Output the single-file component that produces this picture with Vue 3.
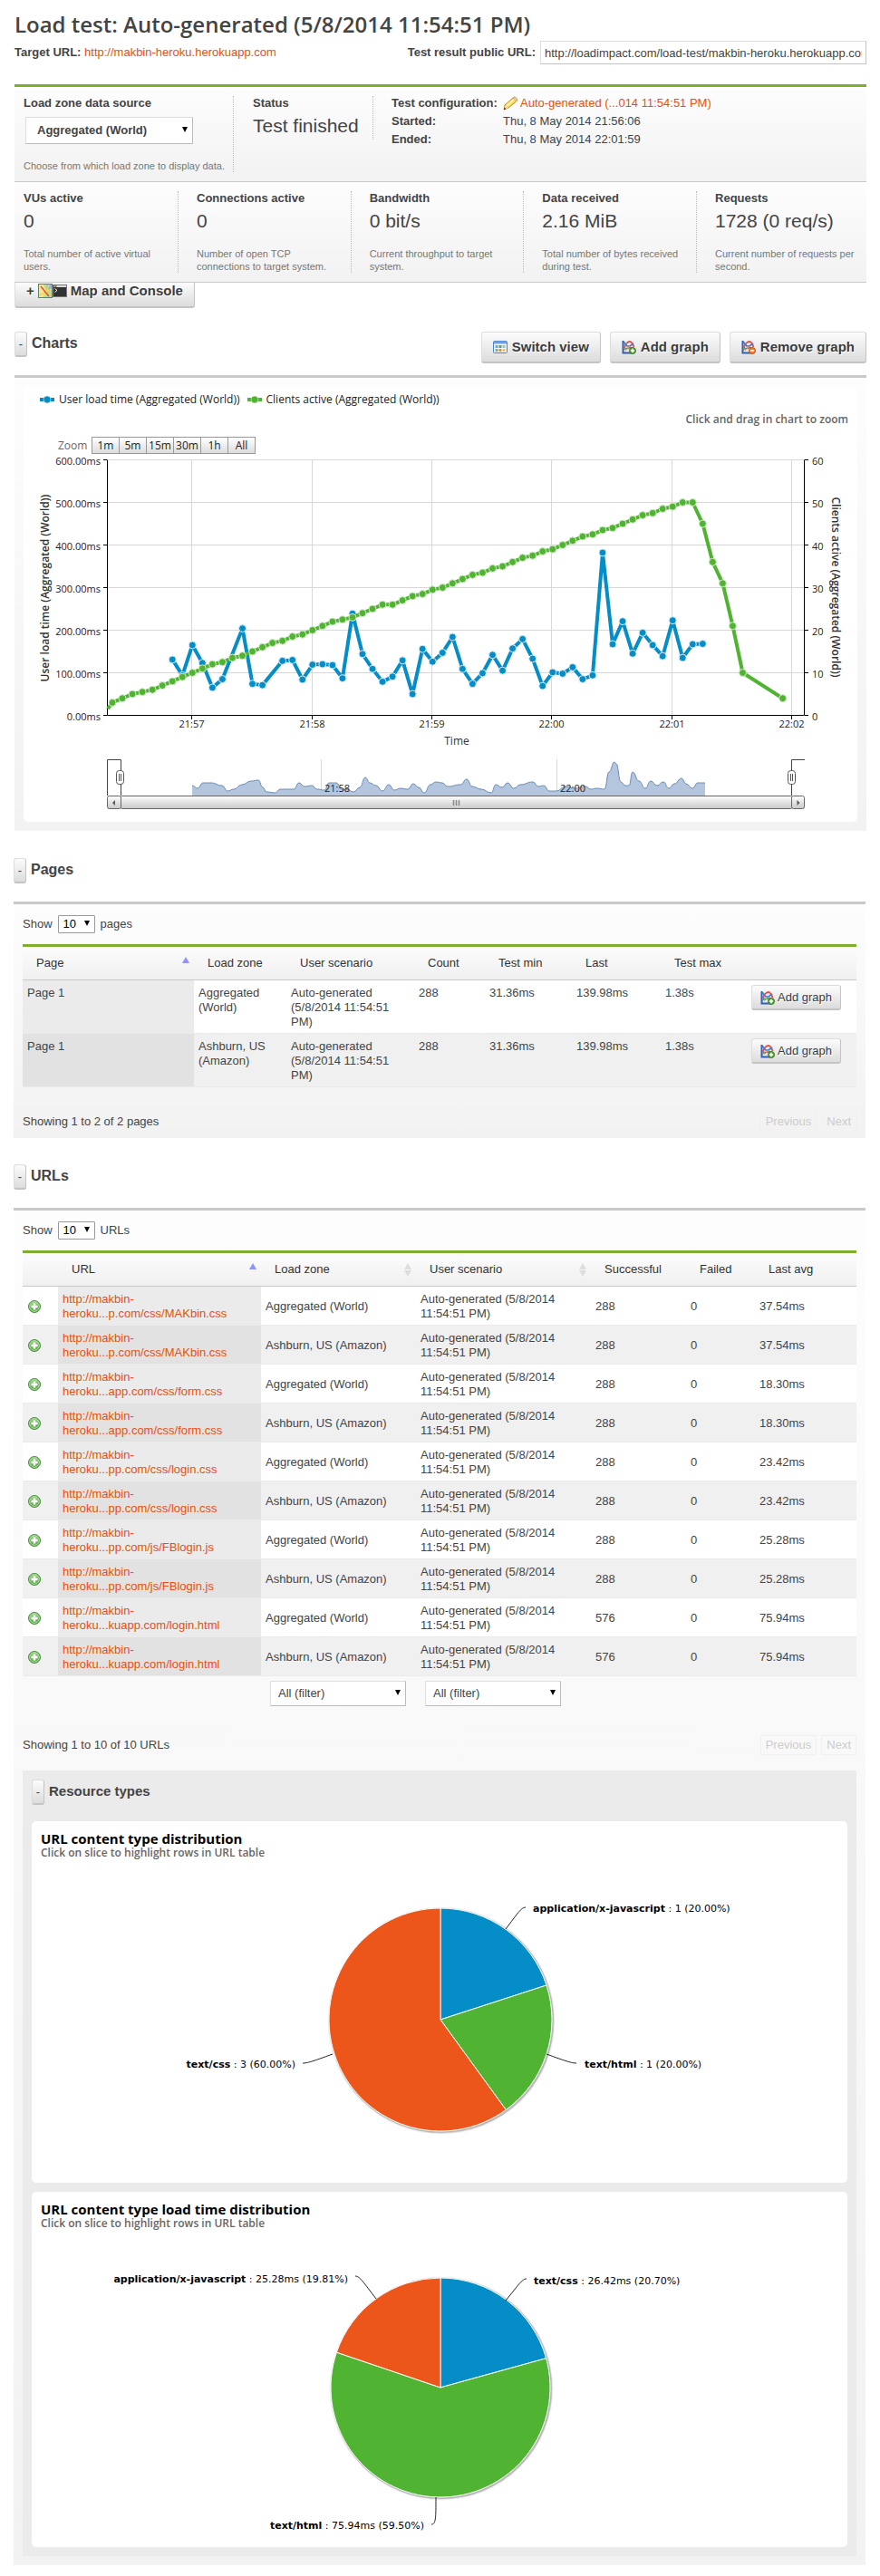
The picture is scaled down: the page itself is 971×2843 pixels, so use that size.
<script setup>
import { ref } from 'vue'

const loadZone = ref('Aggregated (World)')
const publicUrl = ref('http://loadimpact.com/load-test/makbin-heroku.herokuapp.com-1')
const pageSize = ref('10')
const urlSize = ref('10')
const zoneFilter = ref('All (filter)')
const scenarioFilter = ref('All (filter)')

const stats = [
  { name: 'VUs active', value: '0', note: 'Total number of active virtual users.' },
  { name: 'Connections active', value: '0', note: 'Number of open TCP connections to target system.' },
  { name: 'Bandwidth', value: '0 bit/s', note: 'Current throughput to target system.' },
  { name: 'Data received', value: '2.16 MiB', note: 'Total number of bytes received during test.' },
  { name: 'Requests', value: '1728 (0 req/s)', note: 'Current number of requests per second.' }
]

const scenario = 'Auto-generated (5/8/2014 11:54:51 PM)'
const zones = ['Aggregated (World)', 'Ashburn, US (Amazon)']
const pages = zones.map((zone) => ({
  page: 'Page 1', zone, scenario, count: 288, min: '31.36ms', last: '139.98ms', max: '1.38s'
}))
const resources = [
  ['heroku...p.com/css/MAKbin.css', 288, '37.54ms'],
  ['heroku...app.com/css/form.css', 288, '18.30ms'],
  ['heroku...pp.com/css/login.css', 288, '23.42ms'],
  ['heroku...pp.com/js/FBlogin.js', 288, '25.28ms'],
  ['heroku...kuapp.com/login.html', 576, '75.94ms']
]
const urls = resources.flatMap(([tail, ok, avg]) => zones.map((zone) => ({ tail, ok, avg, zone })))

/* Line chart geometry */
const plot = { left: 92.5, right: 861.5, top: 80.5, bottom: 362.5, step: 47 }
const sampleX = (k) => 98 + k * 11.04
const valueY = (v) => plot.bottom - (v / 10) * plot.step

const clientValues = [
  3, 4, 5, 5.5, 6, 7, 8, 9, 10, 11, 12, 12.5, 13.5, 14, 15, 16, 17, 17.5, 18.5, 19, 20, 21, 22, 22.5, 23, 24, 25,
  26, 26, 27, 28, 28.5, 29.5, 30, 31, 32, 33, 33.5, 34.5, 35, 36, 37, 37.5, 38.5, 39, 40, 41, 42, 42.5, 43.5, 44,
  45, 46, 47, 47.5, 48.5, 49, 50, 50, 45, 36, 31, 21, 10, null, null, null, 4
]
const loadValues = [
  131, 94, 165, 123, 65, 85, null, 204, 74, 71, null, 128, 130, 84, 119, 120, 118, 87, 239, 144, 109, 79, 91, 129,
  50, 156, 126, 147, 184, 109, 74, 99, 142, 105, 157, 179, 133, 69, 101, 98, 113, 85, 94, 382, 167, 221, 145, 194,
  165, 139, 223, 135, 167, 168
]
const toPoints = (values, start, scale) => values
  .map((v, i) => (v === null ? null : [sampleX(i + start), valueY(v * scale)]))
  .filter(Boolean)
const clients = toPoints(clientValues, 0, 1)
const loads = toPoints(loadValues, 6, 0.1)
const line = (pts) => pts.map((p) => p.join(',')).join(' ')
const clientLine = line([[93, 355], ...clients])
const loadLine = line(loads)

const leftTicks = [6, 5, 4, 3, 2, 1, 0].map((n) => ({ y: plot.bottom - n * plot.step, ms: (n * 100).toFixed(2) + 'ms', n: n * 10 }))
const times = [['21:57', 185.5], ['21:58', 318.5], ['21:59', 450.5], ['22:00', 582.5], ['22:01', 715.5], ['22:02', 847.5]]
const ranges = ['1m', '5m', '15m', '30m', '1h', 'All']

/* Navigator: [x, height] pairs above its baseline */
const navigator = [
  [186, 11], [192, 8], [198, 14], [207, 14], [219, 11], [225, 5], [232, 7], [241, 12], [251, 16], [259, 17],
  [264, 9], [268, 4], [278, 3], [283, 7], [298, 7], [304, 14], [310, 10], [318, 11], [324, 7], [332, 6],
  [337, 14], [345, 14], [351, 7], [357, 7], [364, 4], [371, 9], [377, 20], [382, 14], [389, 11], [396, 5],
  [403, 12], [409, 6], [416, 8], [424, 7], [430, 13], [436, 9], [442, 3], [449, 12], [455, 15], [462, 14],
  [468, 10], [482, 12], [489, 18], [495, 10], [505, 7], [516, 3], [521, 12], [528, 9], [534, 14], [541, 8],
  [548, 12], [562, 15], [568, 10], [574, 11], [580, 5], [588, 5], [598, 10], [608, 8], [620, 10], [626, 7],
  [633, 8], [641, 7], [646, 26], [652, 37], [654, 35], [659, 15], [664, 11], [668, 11], [672, 26], [679, 16],
  [686, 8], [692, 16], [699, 11], [706, 15], [712, 8], [718, 13], [726, 19], [731, 13], [738, 8], [744, 14], [752, 14]
].map(([x, h]) => [x, 451 - h])
const smooth = (pts) => pts.slice(1).reduce((d, p, i) => {
  const q = pts[i]
  const mid = (p[0] + q[0]) / 2
  return `${d} C${mid},${q[1]} ${mid},${p[1]} ${p[0]},${p[1]}`
}, `M${pts[0]}`)
const navLine = smooth(navigator)
const navArea = `${navLine} V451 H186 Z`

/* Pie charts */
const colors = ['#058dc7', '#50b432', '#ed561b']
const makeSlices = (cx, cy, r, shares) => {
  let at = 0
  const point = (t) => `${cx + r * Math.sin(t * 2 * Math.PI)},${cy - r * Math.cos(t * 2 * Math.PI)}`
  return shares.map((share, i) => {
    const from = at
    at += share
    return { color: colors[i], d: `M${cx},${cy} L${point(from)} A${r},${r} 0 ${share > 0.5 ? 1 : 0} 1 ${point(at)} Z` }
  })
}
const pies = [
  {
    title: 'URL content type distribution', box: '0 48 900 351', cx: 451, cy: 219, r: 123,
    slices: makeSlices(451, 219, 123, [0.2, 0.2, 0.6]),
    labels: [
      { name: 'application/x-javascript', text: '1 (20.00%)', x: 553, y: 100, anchor: 'start', path: 'M545,95 C540,95 536,102 523,119' },
      { name: 'text/html', text: '1 (20.00%)', x: 610, y: 272, anchor: 'start', path: 'M601,267 C596,267 590,265 568,257' },
      { name: 'text/css', text: '3 (60.00%)', x: 291, y: 272, anchor: 'end', path: 'M299,267 C304,267 310,265 332,257' }
    ]
  },
  {
    title: 'URL content type load time distribution', box: '0 48 900 344', cx: 451, cy: 216, r: 121,
    slices: makeSlices(451, 216, 121, [0.207, 0.595, 0.198]),
    labels: [
      { name: 'text/css', text: '26.42ms (20.70%)', x: 554, y: 102, anchor: 'start', path: 'M546,96 C541,96 537,103 523,120' },
      { name: 'text/html', text: '75.94ms (59.50%)', x: 433, y: 372, anchor: 'end', path: 'M441,367 C446,367 446,360 446,337' },
      { name: 'application/x-javascript', text: '25.28ms (19.81%)', x: 349, y: 100, anchor: 'end', path: 'M357,93 C362,93 366,100 380,118' }
    ]
  }
]
</script>

<template>
  <svg class="sprite" width="0" height="0" aria-hidden="true">
    <linearGradient id="steel" x1="0" y1="0" x2="0" y2="1">
      <stop offset="0" stop-color="#fff" /><stop offset="1" stop-color="#c8c8c8" />
    </linearGradient>
    <radialGradient id="leaf" cx=".5" cy=".3" r=".7">
      <stop offset="0" stop-color="#a5d68f" /><stop offset="1" stop-color="#4a9a3c" />
    </radialGradient>
    <symbol id="graph" viewBox="0 0 16 16">
      <path d="M1.5 1V14.5H11" fill="none" stroke="#2a63b5" stroke-width="2" />
      <path d="M2 11C4 9 6 10 8 9S11 8 13 10" fill="none" stroke="#4c9a48" stroke-width="1.5" />
      <path d="M3 9C4 4 7 2 9 2S12 4 13.5 8" fill="none" stroke="#ee4b46" stroke-width="1.8" />
      <path d="M2 2L6 7H9L13 4" fill="none" stroke="#3c7bd0" stroke-width="1.6" />
      <path d="M4 12L9 7" stroke="#e98a8a" />
    </symbol>
    <symbol id="graph-add" viewBox="0 0 16 16">
      <use href="#graph" />
      <circle cx="12" cy="12" r="3.5" fill="#5da03f" stroke="#3d7a24" />
      <path d="M12 9.8V14.2M9.8 12H14.2" stroke="#fff" stroke-width="1.5" />
    </symbol>
    <symbol id="graph-remove" viewBox="0 0 16 16">
      <use href="#graph" />
      <circle cx="12" cy="12" r="3.5" fill="#f08030" stroke="#c85208" />
      <path d="M9.8 12H14.2" stroke="#fff" stroke-width="1.5" />
    </symbol>
    <symbol id="plus" viewBox="0 0 16 16">
      <circle cx="8" cy="8" r="6.5" fill="url(#leaf)" stroke="#46913a" />
      <circle cx="8" cy="8" r="5.3" fill="none" stroke="#b5dfa8" />
      <path d="M8 4.5V11.5M4.5 8H11.5" stroke="#fff" stroke-width="2.4" />
    </symbol>
  </svg>

  <main class="page">
    <div class="overview">
      <header>
        <h1>Load test: Auto-generated (5/8/2014 11:54:51 PM)</h1>
        <div class="links">
          <p><b>Target URL:</b> <a href="#">http://makbin-heroku.herokuapp.com</a></p>
          <label class="public"><b>Test result public URL:</b><input v-model="publicUrl" type="text" readonly></label>
        </div>
      </header>

      <section class="summary">
        <div class="band">
          <div class="cell zone">
            <label for="zone"><b>Load zone data source</b></label>
            <span class="pick big">
              <select id="zone" v-model="loadZone"><option v-for="z in zones" :key="z">{{ z }}</option></select>
            </span>
            <p class="note">Choose from which load zone to display data.</p>
          </div>
          <div class="cell status"><b>Status</b><p class="value">Test finished</p></div>
          <dl class="config">
            <dt>Test configuration:</dt>
            <dd>
              <svg width="16" height="16" viewBox="0 0 16 16" aria-hidden="true">
                <path d="M1 15L2 10L11 2C12 1 13 1 14 2C16 3.5 15.5 5 14.5 6L6 13Z" fill="#f8d75c" stroke="#c58b28" />
                <path d="M3 10L11.5 3L13 4.5L4.5 12Z" fill="#fff0a0" />
                <path d="M11 2L14.5 6L15.5 4C15.5 2 14 .8 12 1.3Z" fill="#f5cda8" stroke="#c99262" stroke-width=".7" />
                <path d="M2 10.5L5.5 13.5L1 15Z" fill="#f3d5a4" /><path d="M1.5 12.5L3.5 14.3L.8 15.2Z" fill="#4a3420" />
              </svg>
              <a href="#">Auto-generated (...014 11:54:51 PM)</a>
            </dd>
            <dt>Started:</dt><dd>Thu, 8 May 2014 21:56:06</dd>
            <dt>Ended:</dt><dd>Thu, 8 May 2014 22:01:59</dd>
          </dl>
        </div>
        <div class="band stats">
          <div v-for="s in stats" :key="s.name" class="cell">
            <b>{{ s.name }}</b><p class="value">{{ s.value }}</p><p class="note">{{ s.note }}</p>
          </div>
        </div>
      </section>
      <button class="button map" type="button">
        <span>+</span>
        <svg width="32" height="16" viewBox="0 0 32 16" aria-hidden="true">
          <rect x=".5" y=".5" width="15" height="15" fill="#b9dc92" stroke="#5f7d6a" />
          <path d="M1 1H6L9 8L5 15H1Z" fill="#f4e69a" /><path d="M10 1H15V8L9 6Z" fill="#8fbbe8" />
          <path d="M1 13L15 6M7 15L12 1" stroke="#f7d44c" stroke-width="1.5" /><path d="M3 3L7 8L12 14" fill="none" stroke="#e2513d" stroke-width="1.5" />
          <rect x="16.5" y="1.5" width="15" height="13" fill="#333" stroke="#777" />
          <path d="M17 3H31" stroke="#ddd" stroke-width="2" /><path d="M17 3H18.5" stroke="#d33" stroke-width="2" /><path d="M19 3H20.5" stroke="#3a3" stroke-width="2" />
          <path d="M18.5 5.5L21 7.5L18.5 9.5" fill="none" stroke="#fff" />
        </svg>
        Map and Console
      </button>

      <section class="charts">
        <div class="head">
          <button class="toggle" type="button" aria-label="Collapse charts">-</button><h2>Charts</h2>
          <div class="actions">
            <button class="button" type="button">
              <svg width="16" height="16" viewBox="0 0 16 16" aria-hidden="true">
                <rect x=".5" y="1.5" width="15" height="13" rx="1" fill="#f5f9ff" stroke="#4d7fc4" /><path d="M1 3H15" stroke="#6fa0e2" stroke-width="3" />
                <path d="M2.5 7.5H5.5" stroke="#5ea7e8" stroke-width="3" /><path d="M6.5 7.5H9.5" stroke="#57a957" stroke-width="3" /><path d="M10.5 7.5H13.5" stroke="#8cc0f0" stroke-width="3" />
                <path d="M2.5 11.5H5.5" stroke="#76b976" stroke-width="3" /><path d="M6.5 11.5H9.5" stroke="#ec8a3c" stroke-width="3" /><path d="M10.5 11.5H13.5" stroke="#eec454" stroke-width="3" />
              </svg>Switch view
            </button>
            <button class="button" type="button"><svg width="16" height="16"><use href="#graph-add" /></svg>Add graph</button>
            <button class="button" type="button"><svg width="16" height="16"><use href="#graph-remove" /></svg>Remove graph</button>
          </div>
        </div>
        <div class="panel">
          <div class="card line-card">
            <div class="legend">
              <svg width="16" height="10"><path d="M0 5H16" stroke="#058dc7" stroke-width="4" /><circle cx="8" cy="5" r="4" fill="#058dc7" stroke="#fff" stroke-opacity=".5" /></svg>
              <span>User load time (Aggregated (World))</span>
              <svg width="16" height="10"><path d="M0 5H16" stroke="#50b432" stroke-width="4" /><circle cx="8" cy="5" r="4" fill="#50b432" stroke="#fff" stroke-opacity=".5" /></svg>
              <span>Clients active (Aggregated (World))</span>
            </div>
            <p class="hint">Click and drag in chart to zoom</p>
            <div class="zoom"><span>Zoom</span><div class="ranges"><button v-for="r in ranges" :key="r" type="button">{{ r }}</button></div></div>
            <svg class="graphic" viewBox="0 74 920 406" role="img" aria-label="User load time and active clients over time">
              <g stroke="#d8d8d8">
                <path v-for="t in leftTicks.slice(0, 6)" :key="t.n" :d="`M${plot.left} ${t.y}H${plot.right}`" />
                <path v-for="t in times" :key="t[0]" :d="`M${t[1]} ${plot.top}V${plot.bottom}`" />
              </g>
              <g stroke="#000">
                <path :d="`M${plot.left} ${plot.top}V${plot.bottom}H${plot.right}V${plot.top}`" fill="none" />
                <path v-for="t in leftTicks" :key="t.n" :d="`M88 ${t.y}H92M862 ${t.y}H866`" />
                <path v-for="t in times" :key="t[0]" :d="`M${t[1]} 363V367`" />
              </g>
              <g class="tick">
                <template v-for="t in leftTicks" :key="t.n">
                  <text x="85" :y="t.y + 5" text-anchor="end">{{ t.ms }}</text><text x="870" :y="t.y + 5">{{ t.n }}</text>
                </template>
                <text v-for="t in times" :key="t[0]" :x="t[1]" y="376" text-anchor="middle">{{ t[0] }}</text>
              </g>
              <polyline :points="loadLine" fill="none" stroke="#058dc7" stroke-width="4" stroke-linejoin="round" />
              <circle v-for="(p, i) in loads" :key="i" :cx="p[0]" :cy="p[1]" r="4" fill="#058dc7" stroke="#d8edf7" />
              <polyline :points="clientLine" fill="none" stroke="#50b432" stroke-width="4" stroke-linejoin="round" />
              <circle v-for="(p, i) in clients" :key="i" :cx="p[0]" :cy="p[1]" r="4" fill="#50b432" stroke="#d3ecc9" />
              <g class="axis">
                <text transform="translate(28 222) rotate(-90)" text-anchor="middle">User load time (Aggregated (World))</text>
                <text transform="translate(892 221) rotate(90)" text-anchor="middle">Clients active (Aggregated (World))</text>
              </g>
              <text class="time" x="478" y="395" text-anchor="middle">Time</text>
              <path d="M328.5 411V451M588.5 411V451" stroke="#d8d8d8" />
              <path :d="navArea" fill="#b4c6dd" /><path :d="navLine" fill="none" stroke="#6c8cb6" />
              <g class="tick"><text x="332" y="447">21:58</text><text x="592" y="447">22:00</text></g>
              <path d="M92.5 451V411.5H107.5V451M847.5 451V411.5H862" fill="none" stroke="#444" />
              <g stroke="#666" fill="url(#steel)">
                <rect x="107.5" y="451.5" width="740" height="14" rx="1" />
                <rect x="92.5" y="451.5" width="15" height="14" rx="2" /><rect x="847.5" y="451.5" width="14" height="14" rx="2" />
              </g>
              <path d="M101 456V462L98 459ZM853.5 456V462L856.5 459Z" fill="#555" />
              <path d="M474.5 456V462M477.5 456V462M480.5 456V462" stroke="#888" stroke-width="1.5" />
              <g stroke="#555" fill="#fff">
                <rect x="102.5" y="423.5" width="8" height="15" rx="3" /><rect x="843.5" y="423.5" width="8" height="15" rx="3" />
                <path d="M105.5 427V435M107.5 427V435M846.5 427V435M848.5 427V435" />
              </g>
            </svg>
          </div>
        </div>
      </section>
    </div>

    <div class="tables">
      <section>
        <div class="head"><button class="toggle" type="button" aria-label="Collapse pages">-</button><h2>Pages</h2></div>
        <div class="panel list">
          <label class="show">Show <span class="pick small"><select v-model="pageSize"><option>10</option><option>25</option></select></span> pages</label>
          <table class="pages">
            <colgroup><col class="w189"><col class="w102"><col class="w141"><col class="w78"><col class="w96"><col class="w98"><col class="w95"><col></colgroup>
            <thead>
              <tr>
                <th>Page <i class="sort asc"></i></th><th>Load zone</th><th>User scenario</th><th>Count</th><th>Test min</th><th>Last</th><th>Test max</th><th></th>
              </tr>
            </thead>
            <tbody>
              <tr v-for="p in pages" :key="p.zone">
                <td class="sorted">{{ p.page }}</td><td>{{ p.zone }}</td><td>{{ p.scenario }}</td><td>{{ p.count }}</td><td>{{ p.min }}</td><td>{{ p.last }}</td><td>{{ p.max }}</td>
                <td><button class="button slim" type="button"><svg width="16" height="16"><use href="#graph-add" /></svg>Add graph</button></td>
              </tr>
            </tbody>
          </table>
          <div class="foot"><span>Showing 1 to 2 of 2 pages</span><button type="button" disabled>Previous</button><button type="button" disabled>Next</button></div>
        </div>
      </section>

      <section>
        <div class="head second"><button class="toggle" type="button" aria-label="Collapse URLs">-</button><h2>URLs</h2></div>
        <div class="panel list last">
          <label class="show">Show <span class="pick small"><select v-model="urlSize"><option>10</option><option>25</option></select></span> URLs</label>
          <table class="urls">
            <colgroup><col class="w39"><col class="w224"><col class="w171"><col class="w193"><col class="w105"><col class="w76"><col></colgroup>
            <thead>
              <tr>
                <th></th><th>URL <i class="sort asc"></i></th><th>Load zone <i class="sort both"></i></th><th>User scenario <i class="sort both"></i></th><th>Successful</th><th>Failed</th><th>Last avg</th>
              </tr>
            </thead>
            <tbody>
              <tr v-for="(u, i) in urls" :key="i">
                <td><button class="expand" type="button" aria-label="Show details"><svg width="16" height="16"><use href="#plus" /></svg></button></td>
                <td class="sorted"><a href="#">http://makbin-<br>{{ u.tail }}</a></td><td>{{ u.zone }}</td><td>{{ scenario }}</td><td>{{ u.ok }}</td><td>0</td><td>{{ u.avg }}</td>
              </tr>
            </tbody>
            <tfoot>
              <tr>
                <td></td><td></td>
                <td><span class="pick filter"><select v-model="zoneFilter" aria-label="Load zone filter"><option>All (filter)</option></select></span></td>
                <td><span class="pick filter"><select v-model="scenarioFilter" aria-label="User scenario filter"><option>All (filter)</option></select></span></td>
                <td></td><td></td><td></td>
              </tr>
            </tfoot>
          </table>
          <div class="foot"><span>Showing 1 to 10 of 10 URLs</span><button type="button" disabled>Previous</button><button type="button" disabled>Next</button></div>

          <section class="resources">
            <div class="subhead"><button class="toggle" type="button" aria-label="Collapse resource types">-</button><h3>Resource types</h3></div>
            <div v-for="pie in pies" :key="pie.title" class="card pie">
              <h4>{{ pie.title }}</h4>
              <p>Click on slice to highlight rows in URL table</p>
              <svg class="graphic" :viewBox="pie.box" role="img" :aria-label="pie.title">
                <g fill="none" stroke="#000">
                  <circle :cx="pie.cx + 1" :cy="pie.cy + 1" :r="pie.r" stroke-opacity=".05" stroke-width="5" />
                  <circle :cx="pie.cx + 1" :cy="pie.cy + 1" :r="pie.r" stroke-opacity=".1" stroke-width="3" />
                  <circle :cx="pie.cx + 1" :cy="pie.cy + 1" :r="pie.r" stroke-opacity=".15" stroke-width="2" />
                </g>
                <path v-for="s in pie.slices" :key="s.color" :d="s.d" :fill="s.color" stroke="#fff" stroke-linejoin="round" />
                <path v-for="l in pie.labels" :key="l.name" :d="l.path" fill="none" stroke="#222" />
                <text v-for="l in pie.labels" :key="l.name" class="label" :x="l.x" :y="l.y" :text-anchor="l.anchor"><tspan class="strong">{{ l.name }}</tspan> : {{ l.text }}</text>
              </svg>
            </div>
          </section>
        </div>
      </section>
    </div>
  </main>
</template>

<style>
body { background: #fff; }
</style>

<style scoped>
* { box-sizing: border-box; }
.page { padding: 12px 0 0; font: 13px/16px "Liberation Sans", Arial, sans-serif; color: #444; }
.sprite { position: absolute; }
.overview { padding: 0 15px 0 16px; }
.tables { padding: 0 16px 0 15px; }
h1, h2, h3, h4, p, dl, dd { margin: 0; }
a { color: #e8500f; text-decoration: none; }
button, input, select { font: inherit; color: inherit; margin: 0; }
h1 { font: 600 24px/30px "Open Sans", "Noto Sans", sans-serif; white-space: nowrap; }
.links { display: flex; justify-content: space-between; align-items: center; margin: 3px 0 22px; }
.public { display: flex; align-items: center; gap: 5px; }
.public input { width: 360px; height: 26px; padding: 0 4px; border: 1px solid #ddd; border-right-color: #c4c4c4; border-bottom: 1px solid #c4c4c4; background: #fff; }

.summary { border-top: 3px solid #7fae2c; }
.band { display: flex; padding: 10px 0; border-bottom: 1px solid #c8c8c8; background: linear-gradient(#fdfdfd, #f2f2f2); }
.band b, .band dt { font-weight: bold; }
.cell { display: flex; flex-direction: column; }
.value { margin-top: 5px; font-size: 21px; line-height: 24px; }
.note { font-size: 11px; line-height: 14px; color: #777; }
.zone { width: 242px; padding-left: 10px; border-right: 1px dotted #bbb; }
.zone .note { margin-top: 17px; }
.status { width: 154px; height: 48px; padding-left: 21px; border-right: 1px dotted #bbb; }
.config { display: grid; grid-template-columns: 123px auto; grid-auto-rows: 20px; padding-left: 20px; }
.config dd { display: flex; gap: 3px; }
.stats .cell { flex: 1; padding: 0 10px 0 20px; border-right: 1px dotted #bbb; }
.stats .cell:first-child { flex: 0 0 181px; padding-left: 10px; }
.stats .cell:last-child { border-right: 0; flex: 0 0 187px; }
.stats .note { margin-top: 17px; }

.pick { position: relative; display: inline-flex; }
.pick::after { content: ""; position: absolute; right: 6px; top: 50%; margin-top: -4px; border: 3px solid transparent; border-top: 6px solid #000; border-bottom: 0; pointer-events: none; }
.pick select { appearance: none; width: 100%; border: 1px solid #ddd; border-right-color: #bbb; border-bottom-color: #bbb; border-radius: 0; background: #fff; }
.big { width: 185px; margin: 7px 0 0 2px; }
.big select { height: 30px; padding: 0 12px; font-weight: bold; }
.small { width: 41px; margin: 0 3px; }
.small select { height: 20px; padding: 0 5px; border-color: #999; border-radius: 1px; color: #000; }
.filter { width: 150px; margin-left: 5px; }
.filter select { height: 28px; padding: 0 8px; }

.button { display: inline-flex; align-items: center; justify-content: center; gap: 5px; height: 35px; padding: 0 12px; border: 1px solid #ddd; border-right-color: #c4c4c4; border-bottom: 2px solid #c4c4c4; border-radius: 3px; background: linear-gradient(#fcfcfc, #dcdcdc); font-size: 15px; font-weight: bold; color: #3c3c3c; text-shadow: 1px 1px #fff; white-space: nowrap; }
.map { gap: 4px; height: 28px; padding: 0 12px 8px; border-top: 0; border-radius: 0 0 3px 3px; vertical-align: top; }
.slim { height: 28px; padding: 0 9px; gap: 3px; font-size: 13px; font-weight: normal; }
.toggle { width: 14px; height: 28px; padding: 0; border: 1px solid #ddd; border-right-color: #c4c4c4; border-bottom: 2px solid #c4c4c4; border-radius: 3px; background: linear-gradient(#fcfcfc, #dcdcdc); text-align: center; }
.charts { margin-top: 26px; }
.head { display: flex; align-items: flex-start; height: 48px; gap: 5px; }
h2, h3 { font-size: 16px; line-height: 26px; }
h3 { font-size: 15px; }
.actions { display: flex; gap: 10px; margin-left: auto; }
.tables .head { margin-top: 30px; }
.tables .second { margin-top: 29px; }
.panel { padding: 10px; border-top: 3px solid #c9c9c9; background: linear-gradient(#fdfdfd, #f2f2f2); }
.card { border-radius: 5px; background: #fff; }
.graphic { display: block; width: 100%; height: auto; }

.line-card, .pie { font-family: "Open Sans", "Noto Sans", sans-serif; }
.line-card { padding-top: 6px; }
.legend { display: flex; align-items: center; padding-left: 18px; font-size: 12px; font-weight: 500; line-height: 16px; color: #222; }
.legend span { margin: 0 8px 0 5px; }
.hint { padding: 6px 10px 0 0; text-align: right; font-size: 12px; font-weight: 600; line-height: 16px; color: #666; }
.zoom { display: flex; padding: 11px 0 0 38px; font-size: 12px; line-height: 19px; color: #666; }
.zoom span { width: 37px; }
.ranges { display: flex; }
.ranges button { width: 31px; height: 19px; margin-right: -1px; padding: 0; border: 1px solid #999; background: linear-gradient(#fff, #ddd); line-height: 16px; color: #222; }
.tick { font-size: 11px; fill: #222; }
.axis { font-size: 12px; font-weight: 600; fill: #333; }
.time { font-size: 12px; font-weight: 500; fill: #333; }

.list { padding: 12px 10px 7px; }
.last { padding-bottom: 10px; }
.show { display: flex; align-items: center; gap: 3px; margin-bottom: 12px; }
table { width: 100%; table-layout: fixed; border-collapse: separate; border-spacing: 0; border-top: 3px solid #7fae2c; }
.w189 { width: 189px; } .w102 { width: 102px; } .w141 { width: 141px; } .w78 { width: 78px; }
.w96 { width: 96px; } .w98 { width: 98px; } .w95 { width: 95px; }
.w39 { width: 39px; } .w224 { width: 224px; } .w171 { width: 171px; } .w193 { width: 193px; }
.w105 { width: 105px; } .w76 { width: 76px; }
th { position: relative; height: 37px; padding: 0 15px; border-bottom: 1px solid #c8c8c8; background: linear-gradient(#fcfcfc, #f0f0f0); text-align: left; font-weight: normal; color: #333; white-space: nowrap; }
tbody td { padding: 6px 5px 4px; border-bottom: 1px solid #ebebeb; background: #fff; vertical-align: top; }
.urls tbody td { vertical-align: middle; }
.urls tbody td:nth-child(4) { padding-right: 30px; }
tbody tr:nth-child(even) td { background: #f0f0f0; }
tbody td.sorted { background: #ebebeb; }
tbody tr:nth-child(even) td.sorted { background: #e2e2e2; }
tfoot td { padding: 5px; }
tfoot .pick { vertical-align: top; }
.pages td:last-child { padding-top: 5px; }
.sort { position: absolute; right: 5px; top: 11px; }
.sort::before { content: ""; display: block; border: 4px solid transparent; border-top: 0; border-bottom: 7px solid #ddd; }
.asc::before { border-bottom-color: #8f92ff; }
.both::after { content: ""; display: block; margin-top: 1px; border: 4px solid transparent; border-bottom: 0; border-top: 7px solid #ddd; }
.expand { display: flex; padding: 0; border: 0; background: none; }
.foot { display: flex; align-items: center; gap: 5px; margin-top: 27px; }
.foot span { margin-right: auto; }
.foot button { height: 22px; padding: 0 5px; border: 1px solid #f0f0f0; background: none; color: #ccc; }

.resources { margin-top: 17px; padding: 10px; background: #ebebeb; }
.subhead { display: flex; gap: 5px; height: 46px; }
.pie { padding-top: 10px; }
.pie + .pie { margin-top: 10px; }
.pie h4 { padding-left: 10px; font-size: 15px; line-height: 18px; font-weight: 700; color: #000; }
.pie p { padding-left: 10px; font-size: 12px; line-height: 14px; font-weight: 600; color: #666; }
.pie .graphic { margin-top: 6px; }
.label { font-family: "DejaVu Sans", sans-serif; font-size: 11px; fill: #000; white-space: pre; }
.strong { font-weight: bold; }
</style>
